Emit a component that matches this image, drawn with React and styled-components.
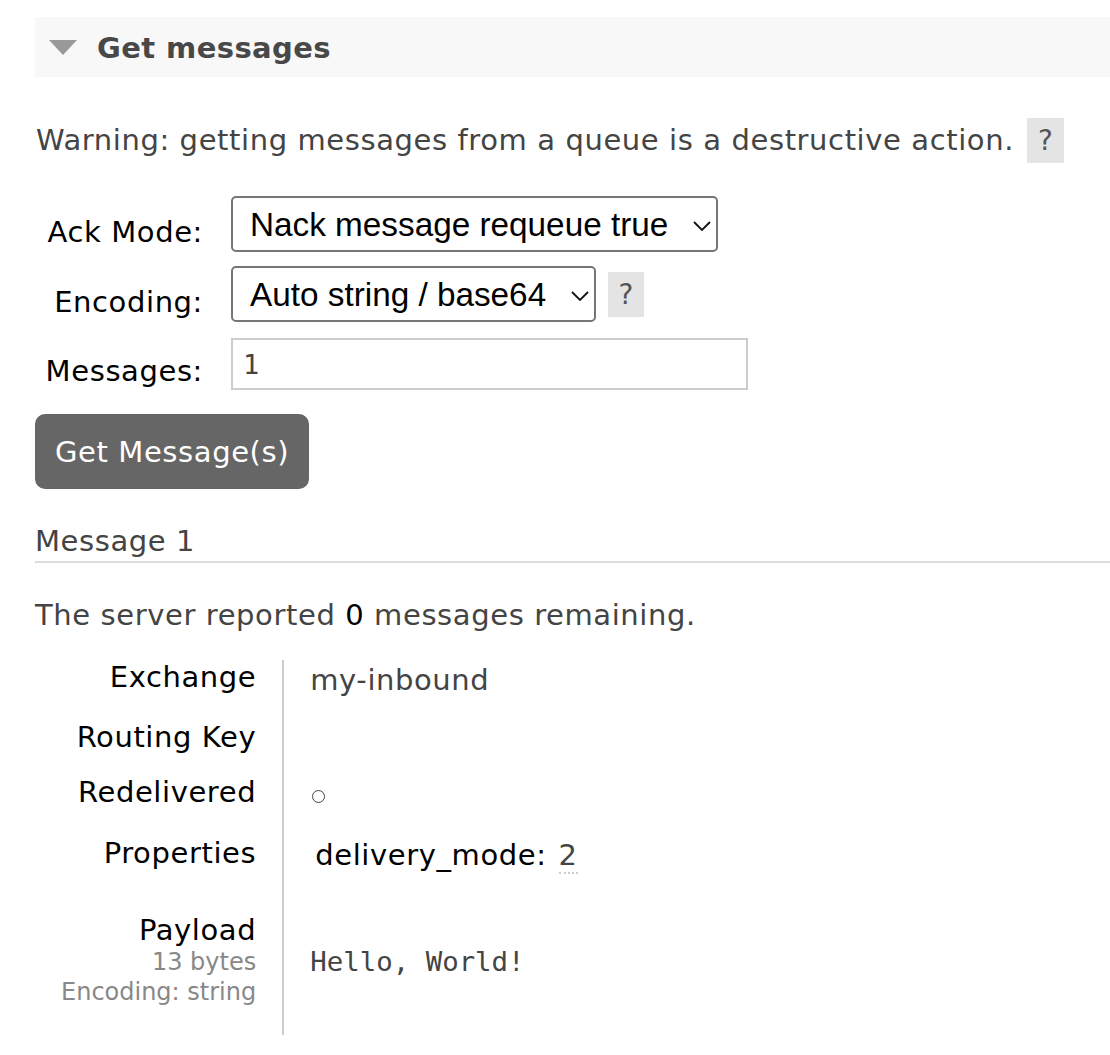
import styled, { createGlobalStyle } from "styled-components";

const GlobalStyle = createGlobalStyle`
  body {
    margin: 0;
    background: #fff;
    font-family: "DejaVu Sans", Verdana, sans-serif;
    font-size: 29px;
    letter-spacing: 0.6px;
    color: #444;
  }
`;

const Page = styled.div`
  padding: 17px 0 20px 35px;
  overflow: hidden;
`;

const SectionHeader = styled.div`
  display: flex;
  align-items: center;
  gap: 20px;
  height: 60px;
  padding-left: 14px;
  background: #f8f8f8;
`;

const Triangle = styled.span`
  width: 0;
  height: 0;
  border-left: 14px solid transparent;
  border-right: 14px solid transparent;
  border-top: 15px solid #999;
`;

const SectionTitle = styled.h2`
  margin: 2px 0 0;
  font-size: 29px;
  letter-spacing: 0.4px;
  font-weight: bold;
  color: #484848;
`;

const Warning = styled.p`
  display: flex;
  align-items: center;
  gap: 13px;
  margin: 41px 0 0 1px;
  line-height: 45px;
`;

const Help = styled.span`
  display: inline-flex;
  align-items: center;
  justify-content: center;
  width: ${(p) => p.$w || 37}px;
  height: ${(p) => p.$h || 45}px;
  background: #e4e4e4;
  color: #555;
  font-size: 28px;
  letter-spacing: 0;
`;

const Form = styled.div`
  display: grid;
  grid-template-columns: 168px auto;
  column-gap: 28px;
  row-gap: 14px;
  margin-top: 33px;
  justify-items: start;
`;

const Label = styled.label`
  justify-self: end;
  align-self: center;
  margin-top: 16px;
  color: #000;
  line-height: 34px;
  white-space: nowrap;
`;

const Control = styled.div`
  display: flex;
  align-items: center;
  gap: 12px;
  margin-top: ${(p) => p.$mt || 0}px;
`;

const SelectWrap = styled.span`
  position: relative;
  display: inline-flex;
`;

const Select = styled.select`
  appearance: none;
  height: 56px;
  padding: 0 47px 0 17px;
  font-family: "Liberation Sans", Arial, sans-serif;
  font-size: 33.3px;
  letter-spacing: 0;
  color: #000;
  background: #fff;
  border: 2px solid #767676;
  border-radius: 5px;
`;

const Chevron = styled.svg`
  position: absolute;
  right: 7px;
  top: 50%;
  width: 18px;
  height: 10px;
  margin-top: -3px;
  pointer-events: none;
`;

const Input = styled.input`
  box-sizing: border-box;
  width: 517px;
  height: 52px;
  padding: 0 10px;
  font-family: "DejaVu Sans Mono", monospace;
  font-size: 27px;
  color: #444;
  border: 2px solid #ccc;
  outline: none;
`;

const Button = styled.button`
  margin-top: 24px;
  height: 75px;
  padding: 0 20px;
  background: #666;
  color: #fff;
  border: none;
  border-radius: 10px;
  font-family: "DejaVu Sans", Verdana, sans-serif;
  font-size: 29px;
  letter-spacing: 0.6px;
`;

const MessageTitle = styled.h3`
  margin: 35px 0 0;
  padding-bottom: 3px;
  font-size: 29px;
  font-weight: normal;
  color: #444;
  border-bottom: 2px solid #ddd;
  line-height: 34px;
`;

const Remaining = styled.p`
  margin: 35px 0 0;
  line-height: 34px;
  b {
    font-weight: normal;
    color: #000;
  }
`;

const Facts = styled.table`
  margin-top: 28px;
  border-collapse: collapse;
`;

const FactLabel = styled.th`
  padding: 0 26px ${(p) => p.$pb}px 26px;
  text-align: right;
  vertical-align: top;
  font-weight: normal;
  color: #000;
  line-height: 34px;
  border-right: 2px solid #ccc;
  white-space: nowrap;
`;

const FactValue = styled.td`
  padding: ${(p) => p.$pt || 0}px 0 0 26px;
  vertical-align: ${(p) => (p.$middle ? "middle" : "top")};
  line-height: 34px;
  color: #444;
`;

const Sub = styled.div`
  font-size: 24px;
  letter-spacing: 0;
  line-height: 30px;
  color: #888;
`;

const Circle = styled.span`
  display: inline-block;
  width: 11px;
  height: 11px;
  margin-left: 2px;
  border: 1.5px solid #444;
  border-radius: 50%;
`;

const PropKey = styled.span`
  margin-left: 5px;
  color: #000;
`;

const PropVal = styled.abbr`
  margin-left: 12px;
  text-decoration: none;
  border-bottom: 2px dotted #ccc;
  color: #444;
`;

const Pre = styled.pre`
  margin: 0 0 24px;
  font-family: "DejaVu Sans Mono", monospace;
  font-size: 27.4px;
  letter-spacing: 0;
  color: #444;
`;

function Dropdown({ defaultValue, children }) {
  return (
    <SelectWrap>
      <Select defaultValue={defaultValue}>{children}</Select>
      <Chevron viewBox="0 0 18 10">
        <path d="M1 1 L9 9 L17 1" fill="none" stroke="#111" strokeWidth="1.8" />
      </Chevron>
    </SelectWrap>
  );
}

export default function App() {
  return (
    <Page>
      <GlobalStyle />
      <SectionHeader>
        <Triangle />
        <SectionTitle>Get messages</SectionTitle>
      </SectionHeader>

      <Warning>
        Warning: getting messages from a queue is a destructive action.
        <Help>?</Help>
      </Warning>

      <Form>
        <Label>Ack Mode:</Label>
        <Control>
          <Dropdown defaultValue="reject_requeue_true">
            <option value="reject_requeue_true">Nack message requeue true</option>
            <option value="ack_requeue_false">Automatic ack</option>
            <option value="reject_requeue_false">Reject requeue false</option>
          </Dropdown>
        </Control>

        <Label>Encoding:</Label>
        <Control>
          <Dropdown defaultValue="auto">
            <option value="auto">Auto string / base64</option>
            <option value="base64">base64</option>
          </Dropdown>
          <Help $w={36} $h={45}>?</Help>
        </Control>

        <Label>Messages:</Label>
        <Control $mt={2}>
          <Input type="text" defaultValue="1" />
        </Control>
      </Form>

      <Button>Get Message(s)</Button>

      <MessageTitle>Message 1</MessageTitle>
      <Remaining>
        The server reported <b>0</b> messages remaining.
      </Remaining>

      <Facts>
        <tbody>
          <tr>
            <FactLabel $pb={26}>Exchange</FactLabel>
            <FactValue $pt={3}>my-inbound</FactValue>
          </tr>
          <tr>
            <FactLabel $pb={21}>Routing Key</FactLabel>
            <FactValue></FactValue>
          </tr>
          <tr>
            <FactLabel $pb={27}>Redelivered</FactLabel>
            <FactValue $pt={1}>
              <Circle />
            </FactValue>
          </tr>
          <tr>
            <FactLabel $pb={43}>Properties</FactLabel>
            <FactValue $pt={2}>
              <PropKey>delivery_mode:</PropKey>
              <PropVal title="persistent">2</PropVal>
            </FactValue>
          </tr>
          <tr>
            <FactLabel $pb={28}>
              Payload
              <Sub>13 bytes</Sub>
              <Sub>Encoding: string</Sub>
            </FactLabel>
            <FactValue $middle>
              <Pre>Hello, World!</Pre>
            </FactValue>
          </tr>
        </tbody>
      </Facts>
    </Page>
  );
}
